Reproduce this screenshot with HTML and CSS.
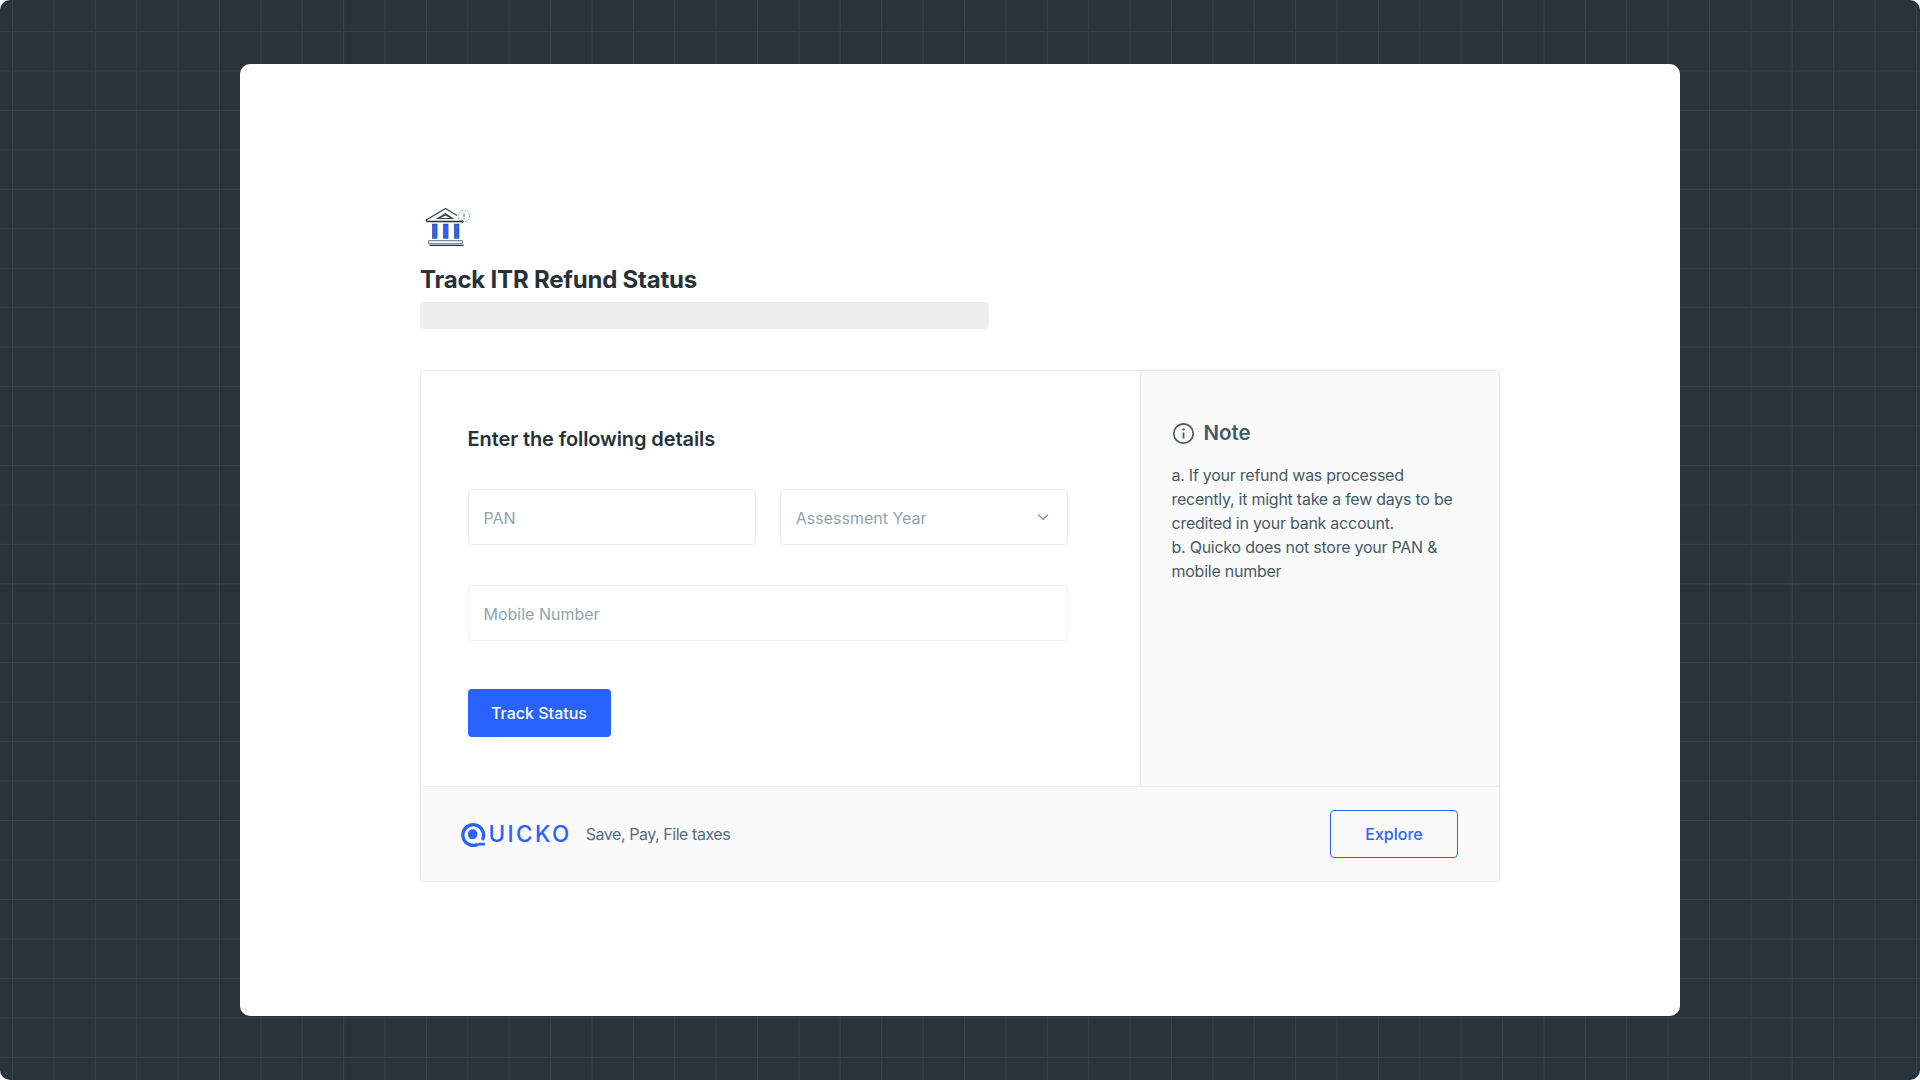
FILE: index.html
```html
<!DOCTYPE html>
<html lang="en">
<head>
<meta charset="utf-8">
<title>Track ITR Refund Status</title>
<link rel="stylesheet" href="styles.css">
</head>
<body>
<main class="backdrop">
  <section class="sheet">
    <div class="content">
      <svg class="bank-icon" width="48" height="44" viewBox="0 0 48 44" fill="none">
        <path d="M4 14.5 L22.5 3.5 L34 10.5" stroke="#37474f" stroke-width="1.3"/>
        <path d="M4 14.5 Q2.5 16.5 5 16.5 H40" stroke="#263238" stroke-width="1.5"/>
        <path d="M12.5 14 L22.5 8 L31.5 14 Z" fill="#37474f"/>
        <path d="M17.5 13 L22.5 10.4 L27 13 Z" fill="#fff"/>
        <circle cx="41" cy="11" r="5.8" stroke="#78909c" stroke-width=".9" stroke-dasharray="1.8 1.2"/>
        <path d="M41 8.4 V12 M41 13.2 V14.2" stroke="#546e7a" stroke-width="1.1"/>
        <path d="M38.5 15 L40.4 16.5 L38.5 18" stroke="#263238" stroke-width=".9"/>
        <rect x="9.3" y="19" width="4.8" height="14.4" fill="#2962ff" stroke="#37474f" stroke-width=".5"/>
        <rect x="20.3" y="19" width="4.8" height="14.4" fill="#2962ff" stroke="#37474f" stroke-width=".5"/>
        <rect x="31.2" y="19" width="4.8" height="14.4" fill="#2962ff" stroke="#37474f" stroke-width=".5"/>
        <rect x="5.6" y="35.6" width="34" height="3" rx=".8" fill="#fff" stroke="#78909c" stroke-width="1.2"/>
        <path d="M6.5 40.4 H40.5" stroke="#263238" stroke-width="1.3"/>
      </svg>
      <h1 class="title">Track ITR Refund Status</h1>
      <div class="skeleton"></div>

      <div class="panel">
        <div class="panel-main">
          <form class="form">
            <h2 class="form-heading">Enter the following details</h2>
            <div class="field-row">
              <div class="field">PAN</div>
              <div class="field field-select">
                <span>Assessment Year</span>
                <svg class="chevron" width="14" height="14" viewBox="0 0 14 14" fill="none"><path d="M2 4.5 L7 9.5 L12 4.5" stroke="#78909c" stroke-width="1.1"/></svg>
              </div>
            </div>
            <div class="field field-light">Mobile Number</div>
            <button class="btn-primary" type="button">Track Status</button>
          </form>
          <aside class="note">
            <h3 class="note-heading">
              <svg width="23" height="23" viewBox="0 0 23 23" fill="none">
                <circle cx="11.5" cy="11.5" r="9.7" stroke="#455a64" stroke-width="1.7"/>
                <path d="M11.5 10.5 V16.5" stroke="#455a64" stroke-width="1.8"/>
                <circle cx="11.5" cy="7.4" r="1.2" fill="#455a64"/>
              </svg>
              Note
            </h3>
            <p class="note-text">a. If your refund was processed recently, it might take a few days to be credited in your bank account.<br>b. Quicko does not store your PAN &amp; mobile number</p>
          </aside>
        </div>
        <footer class="panel-footer">
          <div class="brand">
            <div class="logo">
              <svg width="28" height="25" viewBox="0 0 27 24" fill="none">
                <path d="M17.4 21.4 A10 10 0 1 1 21.6 17.2" stroke="#2962ff" stroke-width="3.2"/>
                <path d="M7.6 11.6 A4.6 4.6 0 0 1 16.8 11.6 C16.8 14 15.4 15 14.4 16.4 H10 C9 15 7.6 14 7.6 11.6 Z" fill="#2962ff"/>
                <path d="M17.5 21.2 L24 21.2" stroke="#2962ff" stroke-width="2.6"/>
              </svg>
              <span class="logo-word">UICKO</span>
            </div>
            <span class="tagline">Save, Pay, File taxes</span>
          </div>
          <button class="btn-outline" type="button">Explore</button>
        </footer>
      </div>
    </div>
  </section>
</main>
</body>
</html>
```

FILE: styles.css
```css
* { box-sizing: border-box; }
html, body { margin: 0; height: 100%; background: #fff; }
body { font-family: "Inter", "Liberation Sans", sans-serif; color: #263238; }

.backdrop {
  width: 1920px;
  height: 1080px;
  border-radius: 10px;
  padding: 64px 240px;
  background-color: #28333a;
  background-image:
    linear-gradient(to right, #37434a 1.2px, transparent 1.2px),
    linear-gradient(to bottom, #37434a 1.2px, transparent 1.2px);
  background-size: 41.4px 39.46px;
  background-position: 12px 31px;
}
.sheet {
  width: 1440px;
  height: 952px;
  background: #fff;
  border-radius: 10px;
  padding: 141px 180px 0;
}
.content { display: flex; flex-direction: column; }
.bank-icon { display: block; margin-left: 3px; }
.title { margin: 15px 0 0; font-size: 24px; line-height: 32px; font-weight: 700; letter-spacing: -0.2px; }
.skeleton { width: 569px; height: 27px; margin-top: 6px; background: #eee; border-radius: 4px; }

.panel {
  margin-top: 41px;
  height: 512px;
  border: 1.5px solid #e8e8e8;
  border-radius: 4px;
  display: flex;
  flex-direction: column;
  overflow: hidden;
}
.panel-main { display: flex; height: 416px; border-bottom: 1.5px solid #eee; }
.form {
  width: 720px;
  padding: 53.5px 72px 0 46.5px;
  display: flex;
  flex-direction: column;
  border-right: 1.5px solid #e8e8e8;
}
.form-heading { margin: 0 0 36.5px; font-size: 20px; line-height: 28px; font-weight: 600; letter-spacing: -0.1px; }
.field-row { display: flex; gap: 24px; margin-bottom: 40px; }
.field {
  flex: 1;
  height: 56px;
  padding: 1px 15px 0;
  display: flex;
  align-items: center;
  justify-content: space-between;
  background: #fff;
  border: 1.5px solid #e8eaeb;
  border-radius: 4px;
  font-size: 16px;
  color: #90a4ae;
}
.chevron { margin-right: 2px; margin-top: -2px; }
.field-light { flex: none; border-color: #f3f3f3; margin-bottom: 48px; }
.btn-primary {
  width: 143px;
  height: 48px;
  flex: none;
  padding-top: 1px;
  background: #2962ff;
  color: #fff;
  border: 0;
  border-radius: 4px;
  font: 500 16px "Inter", "Liberation Sans", sans-serif;
}
.note { flex: 1; background: #fafafa; padding: 48px 30px 0 30.5px; }
.note-heading {
  margin: 0 0 16px;
  display: flex;
  align-items: center;
  gap: 9px;
  font-size: 20.5px;
  line-height: 28px;
  font-weight: 600;
  color: #455a64;
}
.note-text { margin: 0; font-size: 16px; line-height: 24px; color: #455a64; letter-spacing: -0.25px; }

.panel-footer {
  flex: 1;
  background: #fafafa;
  display: flex;
  align-items: center;
  justify-content: space-between;
  padding: 0 41px 0 38.5px;
}
.brand { display: flex; align-items: center; gap: 14px; }
.logo { display: flex; align-items: center; gap: 1px; color: #2962ff; }
.logo-word { font-size: 22.5px; line-height: 24px; font-weight: 500; letter-spacing: 2.4px; }
.tagline { font-size: 16px; color: #546e7a; letter-spacing: -0.45px; }
.btn-outline {
  width: 128px;
  height: 48px;
  background: #fafafa;
  border: 1.5px solid #2962ff;
  border-radius: 4px;
  color: #2962ff;
  font: 500 16px "Inter", "Liberation Sans", sans-serif;
}
```
